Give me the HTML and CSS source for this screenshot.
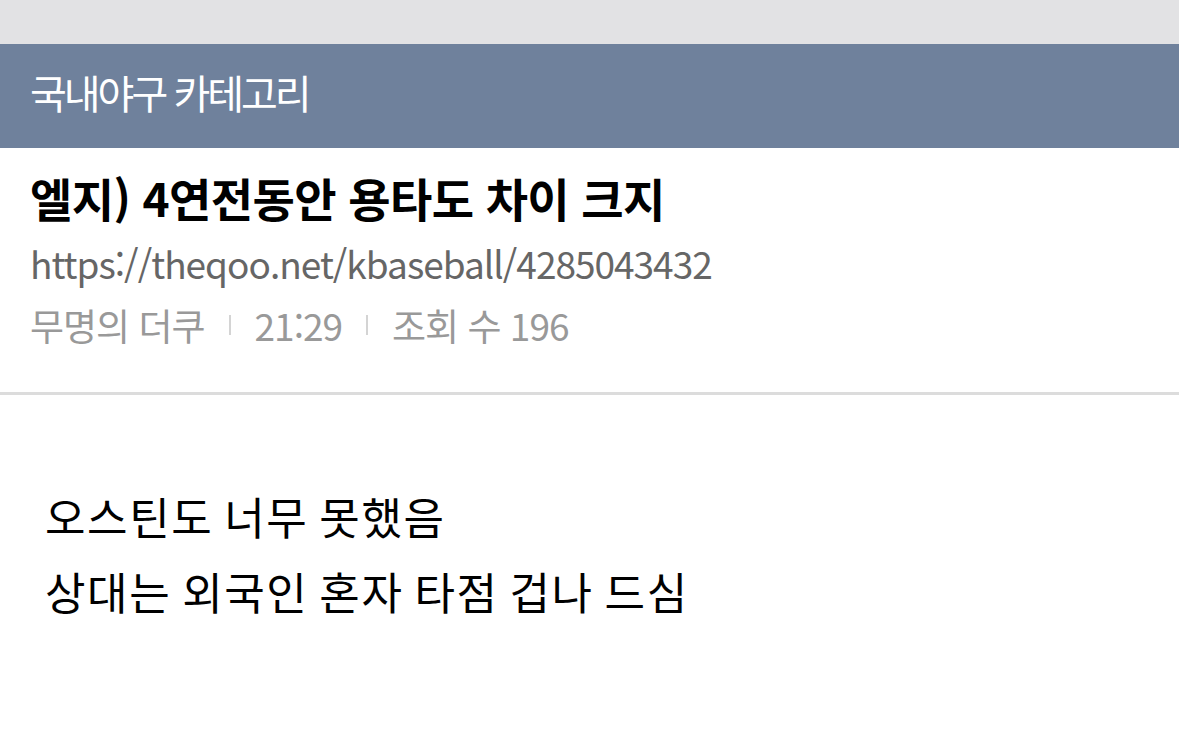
FILE: index.html
```html
<!DOCTYPE html>
<html lang="ko">
<head>
    <meta charset="UTF-8">
    <meta name="viewport" content="width=device-width, initial-scale=1.0">
    <title>국내야구 카테고리</title>
    <link rel="stylesheet" href="styles.css">
</head>
<body>
    <div class="status-bar"></div>

    <header class="category-bar">
        <h2 class="category-name">국내야구 카테고리</h2>
    </header>

    <article class="post">
        <div class="post-head">
            <h1 class="post-title">엘지) 4연전동안 용타도 차이 크지</h1>
            <div class="post-url">https://theqoo.net/kbaseball/4285043432</div>
            <div class="post-meta">
                <span>무명의 더쿠</span>
                <span class="sep"></span>
                <span>21:29</span>
                <span class="sep"></span>
                <span>조회 수 196</span>
            </div>
        </div>

        <div class="post-body">
            <p>오스틴도 너무 못했음</p>
            <p>상대는 외국인 혼자 타점 겁나 드심</p>
        </div>
    </article>
</body>
</html>
```

FILE: styles.css
```css
*, *::before, *::after{
    box-sizing: border-box;
}
body{
    margin: 0;
    background: #fff;
    font-family: "Noto Sans CJK KR", "Noto Sans", sans-serif;
    color: #000;
}
.status-bar{
    height: 44px;
    background: #e2e2e4;
}
.category-bar{
    height: 104px;
    background: #6f819c;
    display: flex;
    align-items: center;
    padding: 0 30px 8px;
}
.category-name{
    margin: 0;
    color: #fff;
    font-size: 40px;
    font-weight: 400;
    letter-spacing: -3px;
}
.post-head{
    padding: 14px 30px 0;
    height: 247px;
    border-bottom: 3px solid #dcdcdc;
}
.post-title{
    margin: 0;
    font-size: 46px;
    font-weight: 700;
    letter-spacing: -0.6px;
    line-height: 70px;
}
.post-url{
    color: #666;
    font-size: 37px;
    letter-spacing: -1px;
    line-height: 62px;
}
.post-meta{
    display: flex;
    align-items: center;
    color: #999;
    font-size: 37px;
    letter-spacing: -1px;
    line-height: 62px;
}
.sep{
    width: 2px;
    height: 20px;
    background: #d4d4d4;
    margin: 0 24px;
}
.post-body{
    padding: 84px 45px 0;
}
.post-body p{
    margin: 0;
    font-size: 44px;
    letter-spacing: 1.6px;
    word-spacing: -3px;
    line-height: 75px;
}
```
